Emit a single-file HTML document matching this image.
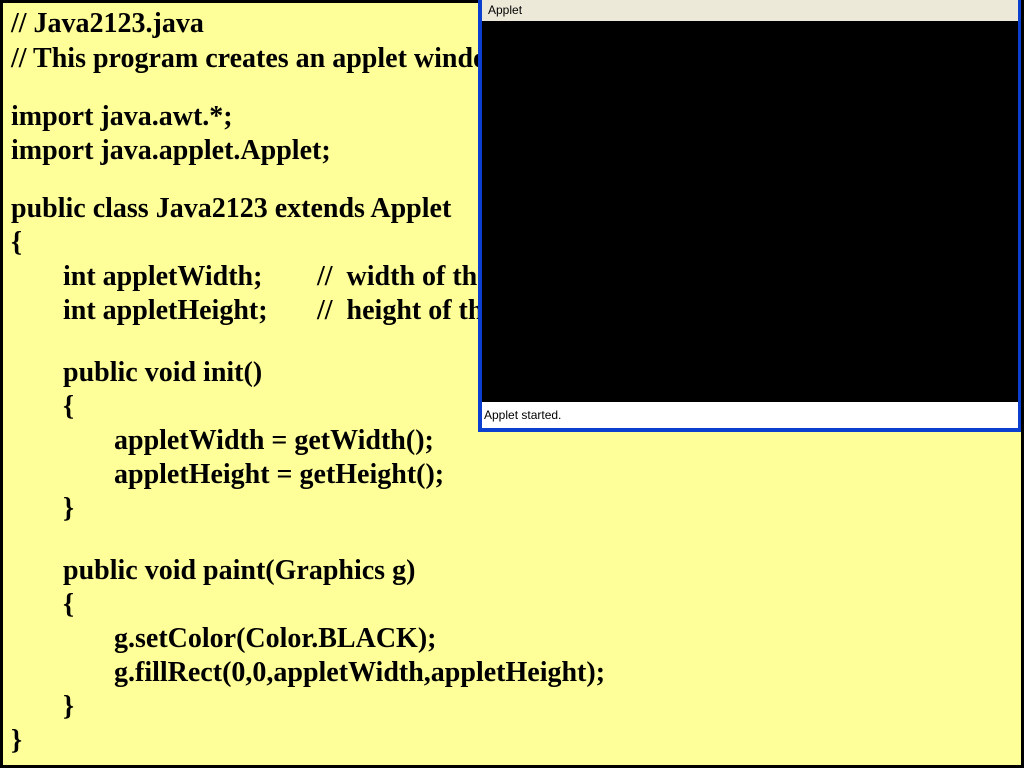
<!DOCTYPE html>
<html><head><meta charset="utf-8"><style>
html,body{margin:0;padding:0}
body{width:1024px;height:768px;position:relative;overflow:hidden;background:#000}
.page{position:absolute;left:3px;top:3px;width:1018px;height:762px;background:#FFFF99}
.l{position:absolute;font-family:"Liberation Serif","Times New Roman",serif;font-weight:bold;font-size:28px;line-height:34px;white-space:pre;color:#000}
.win{position:absolute;left:478px;top:0;width:543px;height:432px;background:#0a3fcf;}
.title{position:absolute;left:482px;top:0;width:536px;height:21px;background:#ECE9D8;font-family:"Liberation Sans",sans-serif;font-size:12px;line-height:20px;color:#000;text-indent:6px}
.canvas{position:absolute;left:482px;top:21px;width:536px;height:381px;background:#000}
.status{position:absolute;left:482px;top:402px;width:536px;height:26px;background:#fff;font-family:"Liberation Sans",sans-serif;font-size:12px;line-height:26px;color:#000;text-indent:2px}
</style></head><body>
<div class="page"></div>
<div class="l" style="left:11px;top:7px">// Java2123.java</div>
<div class="l" style="left:11px;top:42px">// This program creates an applet window</div>
<div class="l" style="left:11px;top:100px">import java.awt.*;</div>
<div class="l" style="left:11px;top:134px">import java.applet.Applet;</div>
<div class="l" style="left:11px;top:192px">public class Java2123 extends Applet</div>
<div class="l" style="left:11px;top:226px">{</div>
<div class="l" style="left:63px;top:260px">int appletWidth;</div>
<div class="l" style="left:317px;top:260px">//  width of the</div>
<div class="l" style="left:63px;top:294px">int appletHeight;</div>
<div class="l" style="left:317px;top:294px">//  height of the</div>
<div class="l" style="left:63px;top:356px">public void init()</div>
<div class="l" style="left:63px;top:390px">{</div>
<div class="l" style="left:114px;top:424px">appletWidth = getWidth();</div>
<div class="l" style="left:114px;top:458px">appletHeight = getHeight();</div>
<div class="l" style="left:63px;top:492px">}</div>
<div class="l" style="left:63px;top:554px">public void paint(Graphics g)</div>
<div class="l" style="left:63px;top:588px">{</div>
<div class="l" style="left:114px;top:622px">g.setColor(Color.BLACK);</div>
<div class="l" style="left:114px;top:656px">g.fillRect(0,0,appletWidth,appletHeight);</div>
<div class="l" style="left:63px;top:690px">}</div>
<div class="l" style="left:11px;top:724px">}</div>
<div class="win"></div>
<div class="title">Applet</div>
<div class="canvas"></div>
<div class="status">Applet started.</div>
</body></html>
